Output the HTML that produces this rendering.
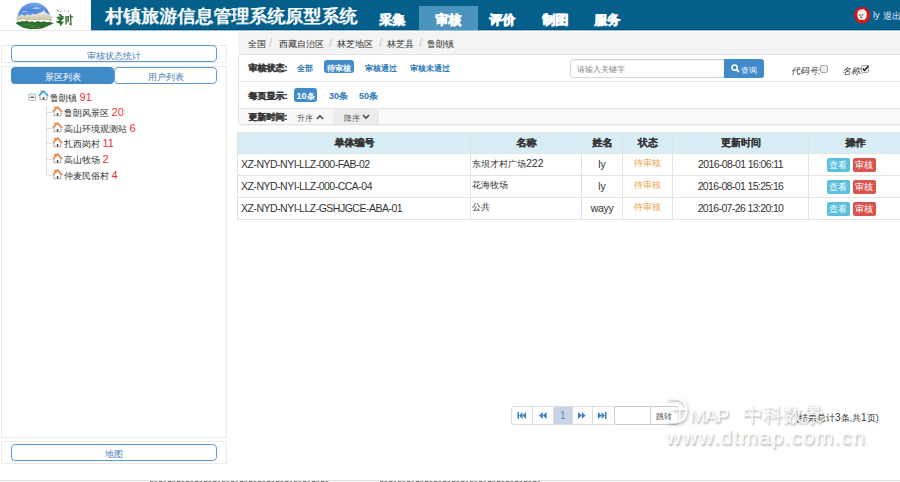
<!DOCTYPE html>
<html><head><meta charset="utf-8">
<style>
@font-face{font-family:"LZ";src:local("Liberation Sans");unicode-range:U+2E80-9FFF,U+F900-FAFF,U+FE30-FE4F,U+FF00-FFEF;size-adjust:133%}
@font-face{font-family:"LZ";font-weight:bold;src:local("Liberation Sans Bold");unicode-range:U+2E80-9FFF,U+F900-FAFF,U+FE30-FE4F,U+FF00-FFEF;size-adjust:133%}
*{box-sizing:border-box;margin:0;padding:0}
html,body{width:900px;height:482px;overflow:hidden;background:#fff;font-family:"LZ","Liberation Sans",sans-serif;color:#333}
.a{position:absolute;white-space:nowrap}
#hdr{position:absolute;left:91px;top:0;width:809px;height:30px;background:#055f8b}
#logo{position:absolute;left:0;top:0;width:91px;height:31px;background:#fff;border-bottom:1px solid #e9e9e9}
.nav{position:absolute;top:13px;color:#fff;font-size:13px;line-height:13px;font-weight:bold;text-shadow:1px 0 0 #fff,0 1px 0 rgba(255,255,255,.7)}
.pnl{position:absolute;left:1px;width:226px;border:1px solid #ebebeb;background:#fff}
.btn{position:absolute;left:11px;width:206px;height:17px;border:1px solid #5b9bd6;border-radius:4px;color:#4a7fba;font-size:9px;text-align:center;line-height:9px;padding-top:6px;background:#fff}
.tree{position:absolute;font-size:9px;line-height:9px;color:#333}
.num{color:#f03030;font-size:11px}
.crumb{position:absolute;left:238px;top:32px;width:662px;height:22px;background:#f4f4f4}
.sep{color:#c4c4c4;position:absolute;font-size:12px;line-height:12px;top:37px}
.fbox{position:absolute;left:238px;top:54px;width:670px;height:71px;background:#fff;border:1px solid #e2e2e2;border-radius:4px;box-shadow:0 1px 1px rgba(0,0,0,.05)}
.lbl{position:absolute;font-size:9px;font-weight:bold;color:#333;line-height:9px;text-shadow:0.7px 0 0 #333}
.lnk{position:absolute;font-size:8px;color:#2a78b4;line-height:9px;font-weight:bold}
.pill{position:absolute;background:#428bca;color:#fff;border-radius:3px;font-size:8px;text-align:center}
table{position:absolute;left:237px;top:132px;width:664px;border-collapse:collapse;table-layout:fixed}
td,th{border:1px solid #e3e3e3;font-size:9px;height:22px;padding:0 3px 2px;white-space:nowrap;overflow:hidden}
th{background:#d9edf7;height:21px;font-weight:bold;text-align:center;font-size:9.5px;padding-top:3px;text-shadow:0.7px 0 0 #333}
.c{text-align:center}
.st{color:#f0a04e}
.ob{display:inline-block;width:23px;height:14px;border-radius:2px;color:#fff;font-size:8.5px;line-height:9px;padding-top:3px;text-align:center;vertical-align:middle}
.pg{position:absolute;top:407px;height:17px;width:1px;background:#ddd}
.wm{position:absolute;white-space:nowrap;color:rgba(255,255,255,.92);text-shadow:1px 2px 2px rgba(0,0,0,.3)}
</style></head><body>

<!-- header -->
<div id="logo">
<svg width="91" height="30" viewBox="0 0 91 30" style="position:absolute;left:0;top:0">
<defs>
<linearGradient id="sky" x1="0" y1="0" x2="0" y2="1"><stop offset="0" stop-color="#7aa6ea"/><stop offset="0.45" stop-color="#4f86de"/><stop offset="1" stop-color="#8fb4e8"/></linearGradient>
<linearGradient id="mt" x1="0" y1="0" x2="0" y2="1"><stop offset="0" stop-color="#f2f2ee"/><stop offset="0.5" stop-color="#dcdac8"/><stop offset="1" stop-color="#bdb692"/></linearGradient>
<radialGradient id="glow" cx="0.5" cy="0.5" r="0.5"><stop offset="0.85" stop-color="#fff" stop-opacity="0"/><stop offset="1" stop-color="#fff" stop-opacity="0.6"/></radialGradient>
<clipPath id="cc"><circle cx="33.8" cy="18.8" r="16.4"/></clipPath></defs>
<g clip-path="url(#cc)">
<rect x="15" y="2" width="40" height="20" fill="url(#sky)"/>
<path d="M32 8.2 Q36 6.8 41 8 Q37 9.2 32 8.2Z M21 11.5 Q25 10.5 28 11.5 Q25 12.3 21 11.5Z" fill="#dfe9f7"/>
<rect x="15" y="2" width="40" height="20" fill="url(#glow)"/>
</g>
<path d="M16.3 18 L19 16 L22.3 14.2 L24 16 L26.5 15 L28 14 L30 15.5 L33 13.8 L36 14.5 L39 13 L42 12 L43.9 10 L45.5 12.5 L48 14 L50 15.5 L52.5 16.3 L51.5 18 L52 21 L17 21.5 Z" fill="url(#mt)"/>
<path d="M17 20.5 Q22 19 27 20 Q31 19.2 36 20.2 Q42 19.2 50 20.3 L50 22 L18 22.2Z" fill="#ffffff"/>
<path d="M15.7 23.5 L18 21.5 L20 22 L22 20.8 L24 21.6 L27 20.6 L29 22 L32 21.2 L35 22.2 L38 21 L41 22 L44 21.2 L47 22.2 L50 21.8 L53.8 23.5 L50 25 L47 26.5 L42 28.5 L36 29 L30 29 L24 28 L20 26 Z" fill="#2f6e2c"/>
<path d="M22 25 Q30 24 36 25.5 M28 27 Q34 26.5 40 27.2" stroke="#4d8a44" stroke-width="0.8" fill="none"/>
<path d="M56.5 10 L59 11 M60 11.5 L61.5 11.8 M64 10.6 L65 11.4 M67.5 10.8 L69 11.4" stroke="#6f9e6a" stroke-width="1" fill="none"/>
<path d="M59.5 14.5 L61.5 15.8 M57.5 17.5 L63 16.8 M58.5 19 L62.5 18.5 L59.5 21 M57 22 L61 21.2 M59 23 L62.5 22.5 L60.5 25" stroke="#2b6a2a" stroke-width="1.5" fill="none" stroke-linecap="round"/>
<path d="M66 16.5 L66 24 M66 17.5 L68.5 16.5 L68 22 M66.5 20 L68 19.5 M70.5 15 L71 24.5 L69.5 24 M70.5 17 L72.5 16.8" stroke="#2f6e2e" stroke-width="1.3" fill="none" stroke-linecap="round"/>
</svg>
</div>
<div id="hdr"></div>
<div class="a" style="left:91px;top:29px;width:809px;height:1px;background:#04507f"></div>
<div class="a" style="left:91px;top:30px;width:809px;height:1px;background:#9dbfd2"></div>
<div class="a" style="left:105px;top:7px;color:#fff;font-size:18px;line-height:18px;text-shadow:1px 0 0 rgba(255,255,255,.9),0 1px 0 rgba(255,255,255,.6)">村镇旅游信息管理系统原型系统</div>
<div class="a" style="left:419px;top:6px;width:59px;height:24px;background:#4a94bd"></div>
<div class="nav a" style="left:379px">采集</div>
<div class="nav a" style="left:435px">审核</div>
<div class="nav a" style="left:489px">评价</div>
<div class="nav a" style="left:542px">制图</div>
<div class="nav a" style="left:594px">服务</div>
<svg class="a" style="left:854px;top:7px" width="17" height="17" viewBox="0 0 17 17"><circle cx="8.2" cy="8.1" r="8.1" fill="#d9141a"/><path d="M10 1.5 Q14 3 15 6 L13 4.5Z" fill="#8a0c10"/><path d="M4 4 Q6 1.8 9.5 2.2 Q12.8 3 12.8 7.5 Q12.8 12.5 8.5 13.8 Q4 13.6 3.4 9 Q3.2 5.5 4 4Z" fill="#f6f3ee"/><circle cx="5.8" cy="8" r="0.8" fill="#333"/><circle cx="8.4" cy="8" r="0.8" fill="#333"/><ellipse cx="7.1" cy="10.2" rx="1" ry="0.7" fill="#222"/><path d="M2 13.5 Q8 12 14.5 13.5 Q12 16.2 8 16.2 Q4 16 2 13.5Z" fill="#e51515"/></svg>
<div class="a" style="left:873px;top:11px;color:#e6efff;font-size:9px;line-height:9px">ly</div>
<div class="a" style="left:883px;top:12px;color:#f0f4ff;font-size:9px;line-height:9px">退出</div>

<!-- left column -->
<div class="pnl" style="top:45px;height:18px"></div>
<div class="btn" style="top:45px">审核状态统计</div>
<div class="pnl" style="top:66px;height:372px"></div>
<div class="a" style="left:11px;top:67px;width:103px;height:17px;background:#428bca;border-radius:4px;color:#fff;font-size:9px;text-align:center;line-height:9px;padding-top:6px">景区列表</div>
<div class="a" style="left:114px;top:67px;width:103px;height:17px;border:1px solid #5b9bd6;border-radius:4px;color:#4a7fba;font-size:9px;text-align:center;line-height:9px;padding-top:5px">用户列表</div>

<svg class="a" style="left:28px;top:93px" width="9" height="9" viewBox="0 0 9 9"><rect x="1" y="1" width="6.5" height="6.5" rx="1.2" fill="#f4f6f8" stroke="#9fb3c8" stroke-width="1"/><path d="M2.6 4.25 H5.9" stroke="#333" stroke-width="1.1"/></svg>
<svg class="a" style="left:38px;top:89px" width="11" height="12" viewBox="0 0 11 12"><rect x="2.6" y="1.5" width="1.2" height="3" fill="#8a8a8a"/><path d="M2 6.3 V10.8 H9 V6.3" fill="#fff" stroke="#9a9a9a" stroke-width="0.8"/><rect x="4.8" y="8" width="1.5" height="2.8" fill="#555"/><path d="M0.9 6.8 L5.5 2.2 L10.1 6.8" fill="none" stroke="#44a6ec" stroke-width="1.9" stroke-linejoin="miter"/></svg>
<div class="tree a" style="left:50px;top:93px">鲁朗镇 <span class="num">91</span></div>

<div class="a" style="left:46px;top:106px;width:1px;height:69px;background:#dcdcdc"></div>
<div class="a" style="left:47px;top:112px;width:5px;height:1px;background:#dcdcdc"></div>
<div class="a" style="left:47px;top:128px;width:5px;height:1px;background:#dcdcdc"></div>
<div class="a" style="left:47px;top:143px;width:5px;height:1px;background:#dcdcdc"></div>
<div class="a" style="left:47px;top:159px;width:5px;height:1px;background:#dcdcdc"></div>
<div class="a" style="left:47px;top:175px;width:5px;height:1px;background:#dcdcdc"></div>

<svg width="0" height="0" style="position:absolute"><defs><g id="hs"><rect x="2.6" y="1.5" width="1.2" height="3" fill="#8a8a8a"/><path d="M2 6.3 V10.8 H9 V6.3" fill="#fff" stroke="#9a9a9a" stroke-width="0.8"/><rect x="4.8" y="8" width="1.5" height="2.8" fill="#555"/><path d="M0.9 6.8 L5.5 2.2 L10.1 6.8" fill="none" stroke="#f2894a" stroke-width="1.9" stroke-linejoin="miter"/></g></defs></svg>
<svg class="a" style="left:52px;top:105px" width="11" height="12"><use href="#hs"/></svg>
<div class="tree a" style="left:64px;top:108px">鲁朗风景区 <span class="num">20</span></div>
<svg class="a" style="left:52px;top:121px" width="11" height="12"><use href="#hs"/></svg>
<div class="tree a" style="left:64px;top:124px">高山环境观测站 <span class="num">6</span></div>
<svg class="a" style="left:52px;top:136px" width="11" height="12"><use href="#hs"/></svg>
<div class="tree a" style="left:64px;top:139px">扎西岗村 <span class="num">11</span></div>
<svg class="a" style="left:52px;top:152px" width="11" height="12"><use href="#hs"/></svg>
<div class="tree a" style="left:64px;top:155px">高山牧场 <span class="num">2</span></div>
<svg class="a" style="left:52px;top:168px" width="11" height="12"><use href="#hs"/></svg>
<div class="tree a" style="left:64px;top:171px">仲麦民俗村 <span class="num">4</span></div>

<div class="pnl" style="top:441px;height:23px"></div>
<div class="btn" style="top:444px;padding-top:5px">地图</div>

<!-- right -->
<div class="crumb"></div>
<div class="a" style="left:248px;top:40px;font-size:9px;line-height:9px">全国</div>
<div class="sep" style="left:269px">/</div>
<div class="a" style="left:279px;top:40px;font-size:9px;line-height:9px">西藏自治区</div>
<div class="sep" style="left:329px">/</div>
<div class="a" style="left:337px;top:40px;font-size:9px;line-height:9px">林芝地区</div>
<div class="sep" style="left:379px">/</div>
<div class="a" style="left:387px;top:40px;font-size:9px;line-height:9px">林芝县</div>
<div class="sep" style="left:419px">/</div>
<div class="a" style="left:427px;top:40px;font-size:9px;line-height:9px">鲁朗镇</div>

<div class="fbox"></div>
<div class="a" style="left:239px;top:81px;width:661px;height:1px;background:#e6e6e6"></div>
<div class="a" style="left:239px;top:108px;width:661px;height:1px;background:#e6e6e6"></div>
<div class="lbl a" style="left:248px;top:64px">审核状态:</div>
<div class="lnk a" style="left:297px;top:64px">全部</div>
<div class="pill a" style="left:324px;top:60px;width:30px;height:13px;line-height:8px;padding-top:5px;font-weight:bold">待审核</div>
<div class="lnk a" style="left:365px;top:64px">审核通过</div>
<div class="lnk a" style="left:410px;top:64px">审核未通过</div>
<div class="a" style="left:570px;top:59px;width:155px;height:19px;border:1px solid #d6d6d6;border-radius:3px 0 0 3px;background:#fff;box-shadow:inset 0 1px 1px rgba(0,0,0,.06)"></div>
<div class="a" style="left:577px;top:65px;font-size:8px;color:#888;line-height:9px">请输入关键字</div>
<div class="a" style="left:724px;top:59px;width:40px;height:19px;background:#428bca;border-radius:0 3px 3px 0"></div>
<svg class="a" style="left:731px;top:64px" width="9" height="9" viewBox="0 0 9 9"><circle cx="3.6" cy="3.6" r="2.6" fill="none" stroke="#fff" stroke-width="1.5"/><path d="M5.5 5.5 L8 8" stroke="#fff" stroke-width="1.8"/></svg>
<div class="a" style="left:741px;top:66px;color:#fff;font-size:8px;line-height:9px">查询</div>
<div class="a" style="left:791px;top:67px;font-size:9px;color:#3a3a3a;font-style:italic;line-height:9px">代码号:</div>
<div class="a" style="left:820px;top:65px;width:8px;height:8px;border:1px solid #aaa;border-radius:2px;background:#eee"></div>
<div class="a" style="left:842px;top:67px;font-size:9px;color:#3a3a3a;font-style:italic;line-height:9px">名称:</div>
<div class="a" style="left:861px;top:65px;width:8px;height:8px;border:1px solid #aaa;border-radius:2px;background:#eee"></div>
<svg class="a" style="left:861px;top:64px" width="9" height="9" viewBox="0 0 9 9"><path d="M1.8 4.5 L3.6 6.5 L7.5 1.8" stroke="#222" stroke-width="1.4" fill="none"/></svg>

<div class="lbl a" style="left:248px;top:92px">每页显示:</div>
<div class="pill a" style="left:294px;top:88px;width:23px;height:14px;line-height:8px;padding-top:4px;font-weight:bold"><span style="font-size:9px">10</span>条</div>
<div class="lnk a" style="left:329px;top:92px;font-weight:bold;font-size:9px">30条</div>
<div class="lnk a" style="left:359px;top:92px;font-weight:bold;font-size:9px">50条</div>

<div class="a" style="left:239px;top:109px;width:661px;height:15px;background:#f9f9fc;border-radius:0 0 0 3px"></div>
<div class="lbl a" style="left:248px;top:113px">更新时间:</div>
<div class="a" style="left:287px;top:109px;width:46px;height:15px;background:#f8f8f8"></div>
<div class="a" style="left:333px;top:109px;width:46px;height:15px;background:#ececec"></div>
<div class="a" style="left:297px;top:115px;font-size:8px;color:#555;line-height:8px">升序</div>
<svg class="a" style="left:316px;top:114px" width="8" height="6" viewBox="0 0 8 6"><path d="M1 5 L4 1.8 L7 5" stroke="#444" stroke-width="1.6" fill="none"/></svg>
<div class="a" style="left:344px;top:115px;font-size:8px;color:#555;line-height:8px">降序</div>
<svg class="a" style="left:362px;top:114px" width="8" height="6" viewBox="0 0 8 6"><path d="M1 1 L4 4.2 L7 1" stroke="#444" stroke-width="1.6" fill="none"/></svg>

<table>
<colgroup><col style="width:233px"><col style="width:111px"><col style="width:41px"><col style="width:50px"><col style="width:136px"><col style="width:93px"></colgroup>
<tr><th>单体编号</th><th>名称</th><th>姓名</th><th>状态</th><th>更新时间</th><th>操作</th></tr>
<tr><td style="font-size:10.5px;letter-spacing:-0.5px">XZ-NYD-NYI-LLZ-000-FAB-02</td><td style="padding-left:1px">东坝才村广场<span style="font-size:10.5px">222</span></td><td class="c" style="font-size:10.5px">ly</td><td class="c st">待审核</td><td class="c" style="font-size:10.5px;letter-spacing:-0.62px">2016-08-01 16:06:11</td><td class="c" style="padding:0 8px 0 0"><span class="ob" style="background:#5bc0de">查看</span><span class="ob" style="background:#d9534f;margin-left:3px">审核</span></td></tr>
<tr><td style="font-size:10.5px;letter-spacing:-0.5px">XZ-NYD-NYI-LLZ-000-CCA-04</td><td style="padding-left:1px">花海牧场</td><td class="c" style="font-size:10.5px">ly</td><td class="c st">待审核</td><td class="c" style="font-size:10.5px;letter-spacing:-0.62px">2016-08-01 15:25:16</td><td class="c" style="padding:0 8px 0 0"><span class="ob" style="background:#5bc0de">查看</span><span class="ob" style="background:#d9534f;margin-left:3px">审核</span></td></tr>
<tr><td style="font-size:10.5px;letter-spacing:-0.5px">XZ-NYD-NYI-LLZ-GSHJGCE-ABA-01</td><td style="padding-left:1px">公共</td><td class="c" style="font-size:10.5px;letter-spacing:-0.3px">wayy</td><td class="c st">待审核</td><td class="c" style="font-size:10.5px;letter-spacing:-0.62px">2016-07-26 13:20:10</td><td class="c" style="padding:0 8px 0 0"><span class="ob" style="background:#5bc0de">查看</span><span class="ob" style="background:#d9534f;margin-left:3px">审核</span></td></tr>
</table>

<!-- pagination -->
<div class="a" style="left:511px;top:406px;width:104px;height:19px;border:1px solid #ddd;border-radius:3px 0 0 3px;background:#fff"></div>
<div class="a" style="left:554px;top:407px;width:18px;height:17px;background:#c9d5e6"></div>
<div class="pg" style="left:532px"></div>
<div class="pg" style="left:553px"></div>
<div class="pg" style="left:572px"></div>
<div class="pg" style="left:592px"></div>
<div class="a" style="left:614px;top:406px;width:37px;height:19px;border:1px solid #ccc;border-radius:3px 0 0 3px;background:#fff"></div>
<div class="a" style="left:650px;top:406px;width:29px;height:19px;border:1px solid #ccc;border-radius:0 3px 3px 0;background:#fff"></div>
<svg class="a" style="left:517px;top:412px" width="10" height="7" viewBox="0 0 10 7"><path d="M0.5 0 H2 V7 H0.5Z M2 3.5 L5.5 0 V7Z M5.5 3.5 L9 0 V7Z" fill="#3f7fc4"/></svg>
<svg class="a" style="left:539px;top:412px" width="8" height="7" viewBox="0 0 8 7"><path d="M0 3.5 L3.8 0 V7Z M3.8 3.5 L7.6 0 V7Z" fill="#3f7fc4"/></svg>
<div class="a" style="left:560px;top:411px;font-size:10px;color:#5d87c0;line-height:10px">1</div>
<svg class="a" style="left:578px;top:412px" width="8" height="7" viewBox="0 0 8 7"><path d="M0 0 L3.8 3.5 L0 7Z M3.8 0 L7.6 3.5 L3.8 7Z" fill="#3f7fc4"/></svg>
<svg class="a" style="left:598px;top:412px" width="10" height="7" viewBox="0 0 10 7"><path d="M0 0 L3.5 3.5 L0 7Z M3.5 0 L7 3.5 L3.5 7Z M7 0 H8.5 V7 H7Z" fill="#3f7fc4"/></svg>
<div class="a" style="left:656px;top:413px;font-size:8px;color:#444;line-height:8px">跳转</div>
<div class="a" style="left:796px;top:413px;font-size:9px;color:#333;line-height:9px">(结果总计<span style="font-size:10px">3</span>条,共<span style="font-size:10px">1</span>页)</div>

<!-- watermark -->
<svg class="a" style="left:664px;top:396px;filter:drop-shadow(1px 2px 1.5px rgba(0,0,0,.3))" width="26" height="30" viewBox="0 0 26 30"><path d="M3 2.5 H11 Q22 3 22.5 14 Q22 25.5 11 26 H3" fill="none" stroke="rgba(255,255,255,.95)" stroke-width="2.2"/><path d="M8 13 H22 M15.5 13 V26" fill="none" stroke="rgba(255,255,255,.95)" stroke-width="2.2"/></svg>
<div class="wm" style="left:690px;top:407px;font-size:19px;line-height:17px;letter-spacing:-1px">MAP</div>
<div class="wm" style="left:743px;top:404px;font-size:20px;line-height:20px">中科数景</div>
<div class="wm" style="left:666px;top:426px;font-size:21px;line-height:21px;letter-spacing:1.1px">www.dtmap.com.cn</div>

<div class="a" style="left:0;top:480px;width:900px;height:1px;background:#e2e2e2"></div>
<div class="a" style="left:150px;top:481px;width:180px;height:1px;background:repeating-linear-gradient(90deg,#777 0 3px,#ccc 3px 5px,#999 5px 7px,#eee 7px 9px)"></div>
<div class="a" style="left:380px;top:481px;width:162px;height:1px;background:repeating-linear-gradient(90deg,#777 0 3px,#ccc 3px 5px,#999 5px 7px,#eee 7px 9px)"></div>
</body></html>
